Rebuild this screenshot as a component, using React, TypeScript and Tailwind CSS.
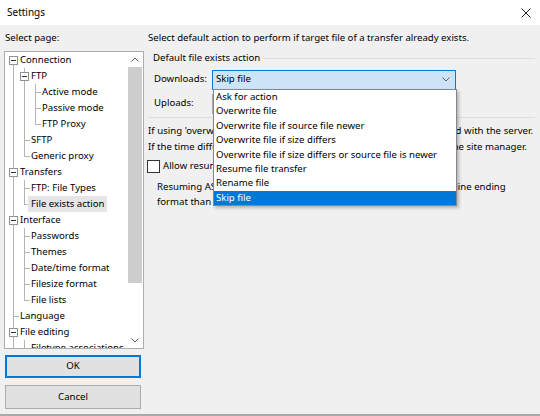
import React from 'react'

type TreeRow = {
  label: string
  c: number // connector x inside the tree
  exp?: boolean
  up: boolean
  down: boolean
  pass: number[]
  selected?: boolean
}

const ROWS: TreeRow[] = [
  { label: 'Connection', c: 8, exp: true, up: false, down: true, pass: [] },
  { label: 'FTP', c: 19, exp: true, up: true, down: true, pass: [8] },
  { label: 'Active mode', c: 30, up: true, down: true, pass: [8, 19] },
  { label: 'Passive mode', c: 30, up: true, down: true, pass: [8, 19] },
  { label: 'FTP Proxy', c: 30, up: true, down: false, pass: [8, 19] },
  { label: 'SFTP', c: 19, up: true, down: true, pass: [8] },
  { label: 'Generic proxy', c: 19, up: true, down: false, pass: [8] },
  { label: 'Transfers', c: 8, exp: true, up: true, down: true, pass: [] },
  { label: 'FTP: File Types', c: 19, up: true, down: true, pass: [8] },
  { label: 'File exists action', c: 19, up: true, down: false, pass: [8], selected: true },
  { label: 'Interface', c: 8, exp: true, up: true, down: true, pass: [] },
  { label: 'Passwords', c: 19, up: true, down: true, pass: [8] },
  { label: 'Themes', c: 19, up: true, down: true, pass: [8] },
  { label: 'Date/time format', c: 19, up: true, down: true, pass: [8] },
  { label: 'Filesize format', c: 19, up: true, down: true, pass: [8] },
  { label: 'File lists', c: 19, up: true, down: false, pass: [8] },
  { label: 'Language', c: 8, up: true, down: true, pass: [] },
  { label: 'File editing', c: 8, exp: true, up: true, down: true, pass: [] },
  { label: 'Filetype associations', c: 19, up: true, down: true, pass: [8] },
]

const ACTIONS = [
  'Ask for action',
  'Overwrite file',
  'Overwrite file if source file newer',
  'Overwrite file if size differs',
  'Overwrite file if size differs or source file is newer',
  'Resume file transfer',
  'Rename file',
  'Skip file',
]

function Chevron({ dir, className }: { dir: 'up' | 'down'; className?: string }) {
  return (
    <svg width="8" height="5" viewBox="0 0 8 5" className={className}>
      <path
        d={dir === 'up' ? 'M0.5 4.5 L4 1 L7.5 4.5' : 'M0.5 0.5 L4 4 L7.5 0.5'}
        fill="none"
        stroke="#606060"
        strokeWidth="1"
      />
    </svg>
  )
}

function Row({ row }: { row: TreeRow }) {
  return (
    <div className="relative h-[16px] flex items-center whitespace-nowrap">
      {/* tree connectors */}
      {row.pass.map(x => (
        <span key={x} className="absolute top-0 bottom-0 w-px bg-[#b4b4b4]" style={{ left: x }} />
      ))}
      {row.up && <span className="absolute top-0 h-[8px] w-px bg-[#b4b4b4]" style={{ left: row.c }} />}
      {row.down && <span className="absolute top-[8px] bottom-0 w-px bg-[#b4b4b4]" style={{ left: row.c }} />}
      {!row.exp && <span className="absolute top-[8px] h-px w-[6px] bg-[#b4b4b4]" style={{ left: row.c }} />}
      {row.exp && (
        <span
          className="absolute top-[4px] w-[9px] h-[9px] border border-[#919191] bg-white flex items-center justify-center"
          style={{ left: row.c - 4 }}
        >
          <span className="w-[5px] h-px bg-[#333]" />
        </span>
      )}
      <span
        className={`absolute h-[16px] leading-[16px] px-[3px] text-[#000] ${row.selected ? 'bg-[#e5e5e5]' : ''}`}
        style={{ left: row.c + 4 }}
      >
        {row.label}
      </span>
    </div>
  )
}

function Combo({ value, open }: { value: string; open?: boolean }) {
  return (
    <div
      className={`w-[244px] h-[20px] flex items-center justify-between pl-[3px] pr-[5px] border ${
        open ? 'bg-[#cce4f7] border-[#0078d7]' : 'bg-[#e5e5e5] border-[#adadad]'
      }`}
    >
      <span>{value}</span>
      <Chevron dir="down" />
    </div>
  )
}

export default function App() {
  return (
    <div className="relative w-[540px] h-[416px] overflow-hidden bg-[#f0f0f0] text-[9.6px] text-[#000] font-['Noto_Sans',sans-serif] border-b-2 border-[#a9a9a9] flex flex-col">
      {/* Title bar */}
      <div className="h-[25px] bg-white flex items-center justify-between pl-[7px] pr-[9px] shrink-0">
        <span className="text-[10px]">Settings</span>
        <svg width="10" height="10" viewBox="0 0 10 10">
          <path d="M0.5 0.5 L9.5 9.5 M9.5 0.5 L0.5 9.5" stroke="#222" strokeWidth="1" />
        </svg>
      </div>

      <div className="flex flex-1">
        {/* Left: page selector */}
        <div className="w-[144px] pl-[4px] pt-[5px] flex flex-col shrink-0">
          <div className="h-[16px] leading-[16px] pl-[1px]">Select page:</div>
          <div className="mt-[5px] h-[298px] border border-[#adadad] bg-white flex">
            <div className="flex-1 overflow-hidden">
              {ROWS.map(r => (
                <Row key={r.label} row={r} />
              ))}
            </div>
            <div className="w-[16px] flex flex-col">
              <div className="h-[15px] flex items-center justify-center">
                <Chevron dir="up" />
              </div>
              <div className="flex-1">
                <div className="mx-[1px] h-[216px] bg-[#cdcdcd]" />
              </div>
              <div className="h-[16px] flex items-center justify-center">
                <Chevron dir="down" />
              </div>
            </div>
          </div>
          <button className="mt-[6px] ml-[1px] w-[136px] h-[23px] bg-[#e1e1e1] border border-[#0078d7] outline outline-1 outline-[#0078d7] -outline-offset-2">
            OK
          </button>
          <button className="mt-[7px] ml-[1px] w-[136px] h-[24px] bg-[#e1e1e1] border border-[#adadad]">
            Cancel
          </button>
        </div>

        {/* Right: file exists action */}
        <div className="flex-1 pl-[4px] pt-[5px] whitespace-nowrap">
          <div className="h-[16px] leading-[16px]">
            Select default action to perform if target file of a transfer already exists.
          </div>

          <div className="mt-[4px] pb-[3px] border-b border-[#dcdcdc] mr-[5px]">
            <div className="h-[16px] flex items-center">
              <span className="pl-[5px] pr-[4px]">Default file exists action</span>
              <div className="flex-1 h-px bg-[#dcdcdc]" />
            </div>
            <div className="mt-[3px] h-[21px] flex items-center">
              <span className="w-[64px] pl-[6px]">Downloads:</span>
              <Combo value="Skip file" open />
            </div>
            <div className="mt-[3px] h-[21px] flex items-center">
              <span className="w-[64px] pl-[6px]">Uploads:</span>
              <Combo value="Overwrite file if source file newer" />
            </div>
          </div>

          <div className="mt-[5px] leading-[16px]">
            <div className="w-[385px] text-justify [text-align-last:justify]">
              If using 'overwrite if newer', your system time has to be synchronized with the server.
            </div>
            <div className="w-[378px] text-justify [text-align-last:justify]">
              If the time differs (e.g. different timezone), set a timezone offset in the site manager.
            </div>
          </div>

          <label className="mt-[4px] h-[15px] flex items-center gap-[3px] -ml-[1px]">
            <span className="w-[13px] h-[13px] border border-[#333] bg-white" />
            <span>Allow resuming of ASCII files</span>
          </label>

          <div className="mt-[5px] pl-[9px] leading-[15px]">
            <div>Resuming ASCII files can cause problems if server uses a different line ending</div>
            <div>format than the client.</div>
          </div>
        </div>
      </div>

      {/* Open drop-down list of the Downloads combo */}
      <div className="absolute left-[213px] top-[89px] w-[244px] h-[117px] bg-white border border-[#828790] shadow-[2px_2px_3px_rgba(0,0,0,0.25)]">
        {ACTIONS.map(a => (
          <div
            key={a}
            className={`h-[14.4px] leading-[14.4px] pl-[2px] whitespace-nowrap ${
              a === 'Skip file' ? 'bg-[#0078d7] text-white' : ''
            }`}
          >
            {a}
          </div>
        ))}
      </div>
    </div>
  )
}
